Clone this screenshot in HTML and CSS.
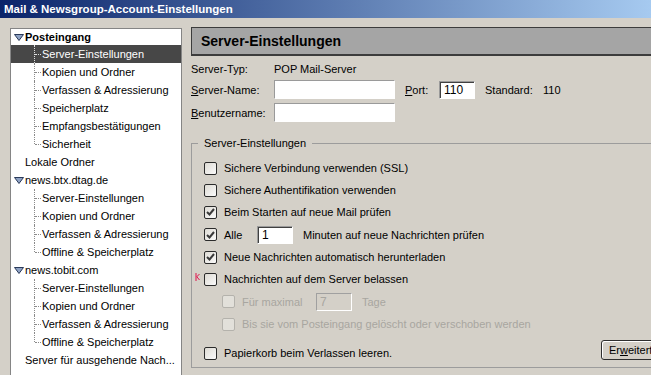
FILE: index.html
```html
<!DOCTYPE html>
<html lang="de">
<head>
    <meta charset="UTF-8">
    <title>Mail &amp; Newsgroup-Account-Einstellungen</title>
    <link rel="stylesheet" href="styles.css">
</head>
<body>
    <div class="titlebar">Mail &amp; Newsgroup-Account-Einstellungen</div>

    <div class="dialog">
        <div class="tree">
            <div class="node account first">
                <svg class="twisty" width="10" height="7" viewBox="0 0 10 7"><path d="M0.5 0.5 H9.5 L5 6.5 Z" fill="#8ea2c4" stroke="#2a3a5a"/></svg>
                <b>Posteingang</b>
            </div>
            <div class="children">
                <div class="node child selected">Server-Einstellungen</div>
                <div class="node child">Kopien und Ordner</div>
                <div class="node child">Verfassen &amp; Adressierung</div>
                <div class="node child">Speicherplatz</div>
                <div class="node child">Empfangsbestätigungen</div>
                <div class="node child">Sicherheit</div>
            </div>
            <div class="node plain">Lokale Ordner</div>
            <div class="node account">
                <svg class="twisty" width="10" height="7" viewBox="0 0 10 7"><path d="M0.5 0.5 H9.5 L5 6.5 Z" fill="#8ea2c4" stroke="#2a3a5a"/></svg>
                news.btx.dtag.de
            </div>
            <div class="children">
                <div class="node child">Server-Einstellungen</div>
                <div class="node child">Kopien und Ordner</div>
                <div class="node child">Verfassen &amp; Adressierung</div>
                <div class="node child">Offline &amp; Speicherplatz</div>
            </div>
            <div class="node account">
                <svg class="twisty" width="10" height="7" viewBox="0 0 10 7"><path d="M0.5 0.5 H9.5 L5 6.5 Z" fill="#8ea2c4" stroke="#2a3a5a"/></svg>
                news.tobit.com
            </div>
            <div class="children">
                <div class="node child">Server-Einstellungen</div>
                <div class="node child">Kopien und Ordner</div>
                <div class="node child">Verfassen &amp; Adressierung</div>
                <div class="node child">Offline &amp; Speicherplatz</div>
            </div>
            <div class="node plain">Server für ausgehende Nach...</div>
        </div>

        <div class="pane">
            <div class="pane-header">Server-Einstellungen</div>

            <div class="form">
                <div class="form-row first-row">
                    <span class="label">Server-Typ:</span>
                    <span>POP Mail-Server</span>
                </div>
                <div class="form-row">
                    <span class="label"><u>S</u>erver-Name:</span>
                    <span class="field wide"></span>
                    <span class="port-label"><u>P</u>ort:</span>
                    <span class="field short deep">110</span>
                    <span class="std-label">Standard:</span>
                    <span>110</span>
                </div>
                <div class="form-row third-row">
                    <span class="label"><u>B</u>enutzername:</span>
                    <span class="field wide"></span>
                </div>
            </div>

            <fieldset class="group">
                <legend>Server-Einstellungen</legend>
                <div class="group-body">
                    <div class="check-row">
                        <span class="cb"></span>
                        <span>Sichere Verbindung verwenden (SSL)</span>
                    </div>
                    <div class="check-row">
                        <span class="cb"></span>
                        <span>Sichere Authentifikation verwenden</span>
                    </div>
                    <div class="check-row">
                        <span class="cb checked"><svg width="9" height="8" viewBox="0 0 9 8"><path d="M1 4 L3.5 6.5 L8 1" fill="none" stroke="#3a3a3a" stroke-width="2"/></svg></span>
                        <span>Beim Starten auf neue Mail prüfen</span>
                    </div>
                    <div class="check-row tall">
                        <span class="cb checked"><svg width="9" height="8" viewBox="0 0 9 8"><path d="M1 4 L3.5 6.5 L8 1" fill="none" stroke="#3a3a3a" stroke-width="2"/></svg></span>
                        <span class="alle">Alle</span>
                        <span class="field short deep">1</span>
                        <span class="after-field">Minuten auf neue Nachrichten prüfen</span>
                    </div>
                    <div class="check-row">
                        <span class="cb checked"><svg width="9" height="8" viewBox="0 0 9 8"><path d="M1 4 L3.5 6.5 L8 1" fill="none" stroke="#3a3a3a" stroke-width="2"/></svg></span>
                        <span>Neue Nachrichten automatisch herunterladen</span>
                    </div>
                    <div class="check-row">
                        <svg class="marker" width="5" height="8" viewBox="0 0 5 8"><path d="M1 0 V8 M1.5 4 L4.5 1 M2 4 L4.5 7" fill="none" stroke="#e0104a" stroke-width="1"/></svg>
                        <span class="cb"></span>
                        <span>Nachrichten auf dem Server belassen</span>
                    </div>
                    <div class="check-row tall sub disabled">
                        <span class="cb"></span>
                        <span class="fuer">Für maximal</span>
                        <span class="field short off">7</span>
                        <span class="after-field">Tage</span>
                    </div>
                    <div class="check-row sub disabled">
                        <span class="cb"></span>
                        <span>Bis sie vom Posteingang gelöscht oder verschoben werden</span>
                    </div>
                    <div class="check-row last">
                        <span class="cb"></span>
                        <span class="grow">Papierkorb beim Verlassen leeren.</span>
                        <button class="btn">Er<u>w</u>eitert...</button>
                    </div>
                </div>
            </fieldset>
        </div>
    </div>
</body>
</html>
```

FILE: styles.css
```css
body {
    margin: 0;
    background: #d4d0c8;
    font-family: 'Liberation Sans', Arial, sans-serif;
    font-size: 11px;
    color: #000;
    overflow: hidden;
    height: 375px;
}
.titlebar {
    height: 18px;
    line-height: 18px;
    padding-left: 4px;
    color: #fff;
    font-weight: bold;
    font-size: 11.5px;
    background: linear-gradient(to right, #0a246a, #a6caf0);
}
.dialog {
    display: flex;
    padding: 9px 0 0 10px;
    gap: 9px;
}
.tree {
    width: 170px;
    flex-shrink: 0;
    height: 346px;
    margin-top: 1px;
    background: #fff;
    border: 1px solid #858585;
}
.node {
    height: 18px;
    line-height: 18px;
    white-space: nowrap;
}
.node.first {
    height: 16px;
    line-height: 16px;
}
.account {
    display: flex;
    align-items: center;
    padding-left: 3px;
    gap: 1px;
}
.account b {
    font-size: 11px;
}
.plain {
    padding-left: 14px;
}
.child {
    position: relative;
    padding-left: 31px;
}
.child::before {
    content: '';
    position: absolute;
    left: 23px;
    top: 0;
    bottom: 0;
    border-left: 1px dotted #8a8a8a;
}
.child:last-child::before {
    bottom: 9px;
}
.child::after {
    content: '';
    position: absolute;
    left: 24px;
    top: 9px;
    width: 6px;
    border-top: 1px dotted #8a8a8a;
}
.selected {
    background: #474747;
    color: #fff;
}
.selected::before,
.selected::after {
    border-color: #e0e0e0;
}
.pane {
    width: 490px;
    flex-shrink: 0;
}
.pane-header {
    height: 26px;
    line-height: 26px;
    padding-left: 9px;
    background: #a5a5a5;
    border: 1px solid #3c3c3c;
    border-bottom-width: 2px;
    font-size: 14px;
    font-weight: bold;
}
.form {
    padding-top: 4px;
}
.form-row {
    display: flex;
    align-items: center;
    height: 19px;
    margin-top: 2px;
}
.first-row {
    height: 18px;
    margin-top: 0;
}
.third-row {
    margin-top: 4px;
}
.label {
    width: 83px;
}
.field {
    box-sizing: border-box;
    height: 19px;
    line-height: 17px;
    padding-left: 3px;
    background: #fff;
    border: 1px solid;
    border-color: #9a9a9a #fff #fff #9a9a9a;
    font-size: 12px;
}
.wide {
    width: 121px;
}
.short {
    width: 36px;
}
.deep {
    box-shadow: inset 1px 1px #404040;
    padding-left: 4px;
}
.port-label {
    margin-left: 10px;
    width: 34px;
}
.std-label {
    margin-left: 10px;
    width: 58px;
}
.group {
    margin: 14px 0 0 0;
    padding: 0 6px 3px 6px;
    border: 1px solid #9c9c9c;
    border-right: none;
}
.group legend {
    padding: 0 6px;
    line-height: 14px;
}
.group-body {
    padding: 7px 0 0 6px;
}
.check-row {
    display: flex;
    align-items: center;
    height: 22px;
    white-space: nowrap;
}
.check-row.tall {
    height: 23px;
}
.check-row.sub {
    padding-left: 18px;
}
.check-row.last {
    margin-top: 7px;
}
.cb {
    box-sizing: border-box;
    width: 13px;
    height: 13px;
    margin-right: 7px;
    border: 1px solid #2b2b2b;
    border-radius: 2px;
    background: linear-gradient(135deg, #dedbd4, #fafafa);
    display: flex;
    align-items: center;
    justify-content: center;
    flex-shrink: 0;
}
.marker {
    margin-left: -9px;
    margin-right: 4px;
    margin-top: -4px;
}
.disabled {
    color: #a8a6a0;
}
.disabled .cb {
    border-color: #b4b2ac;
    background: #e2e0da;
}
.alle {
    width: 33px;
}
.fuer {
    width: 74px;
}
.field.short.deep {
    height: 18px;
    line-height: 16px;
}
.off {
    height: 18px;
    line-height: 16px;
    background: #d4d0c8;
    color: #a8a6a0;
    border-color: #a0a0a0 #fff #fff #a0a0a0;
}
.after-field {
    margin-left: 10px;
}
.grow {
    flex: 1;
}
.btn {
    align-self: flex-start;
    margin-top: -2px;
    width: 74px;
    height: 20px;
    padding: 0 0 0 7px;
    text-align: left;
    font-family: inherit;
    font-size: 11px;
    color: #000;
    background: #d4d0c8;
    border: 1px solid #2e2e2e;
    border-radius: 3px;
    box-shadow: inset 1px 1px #fff;
}
```
